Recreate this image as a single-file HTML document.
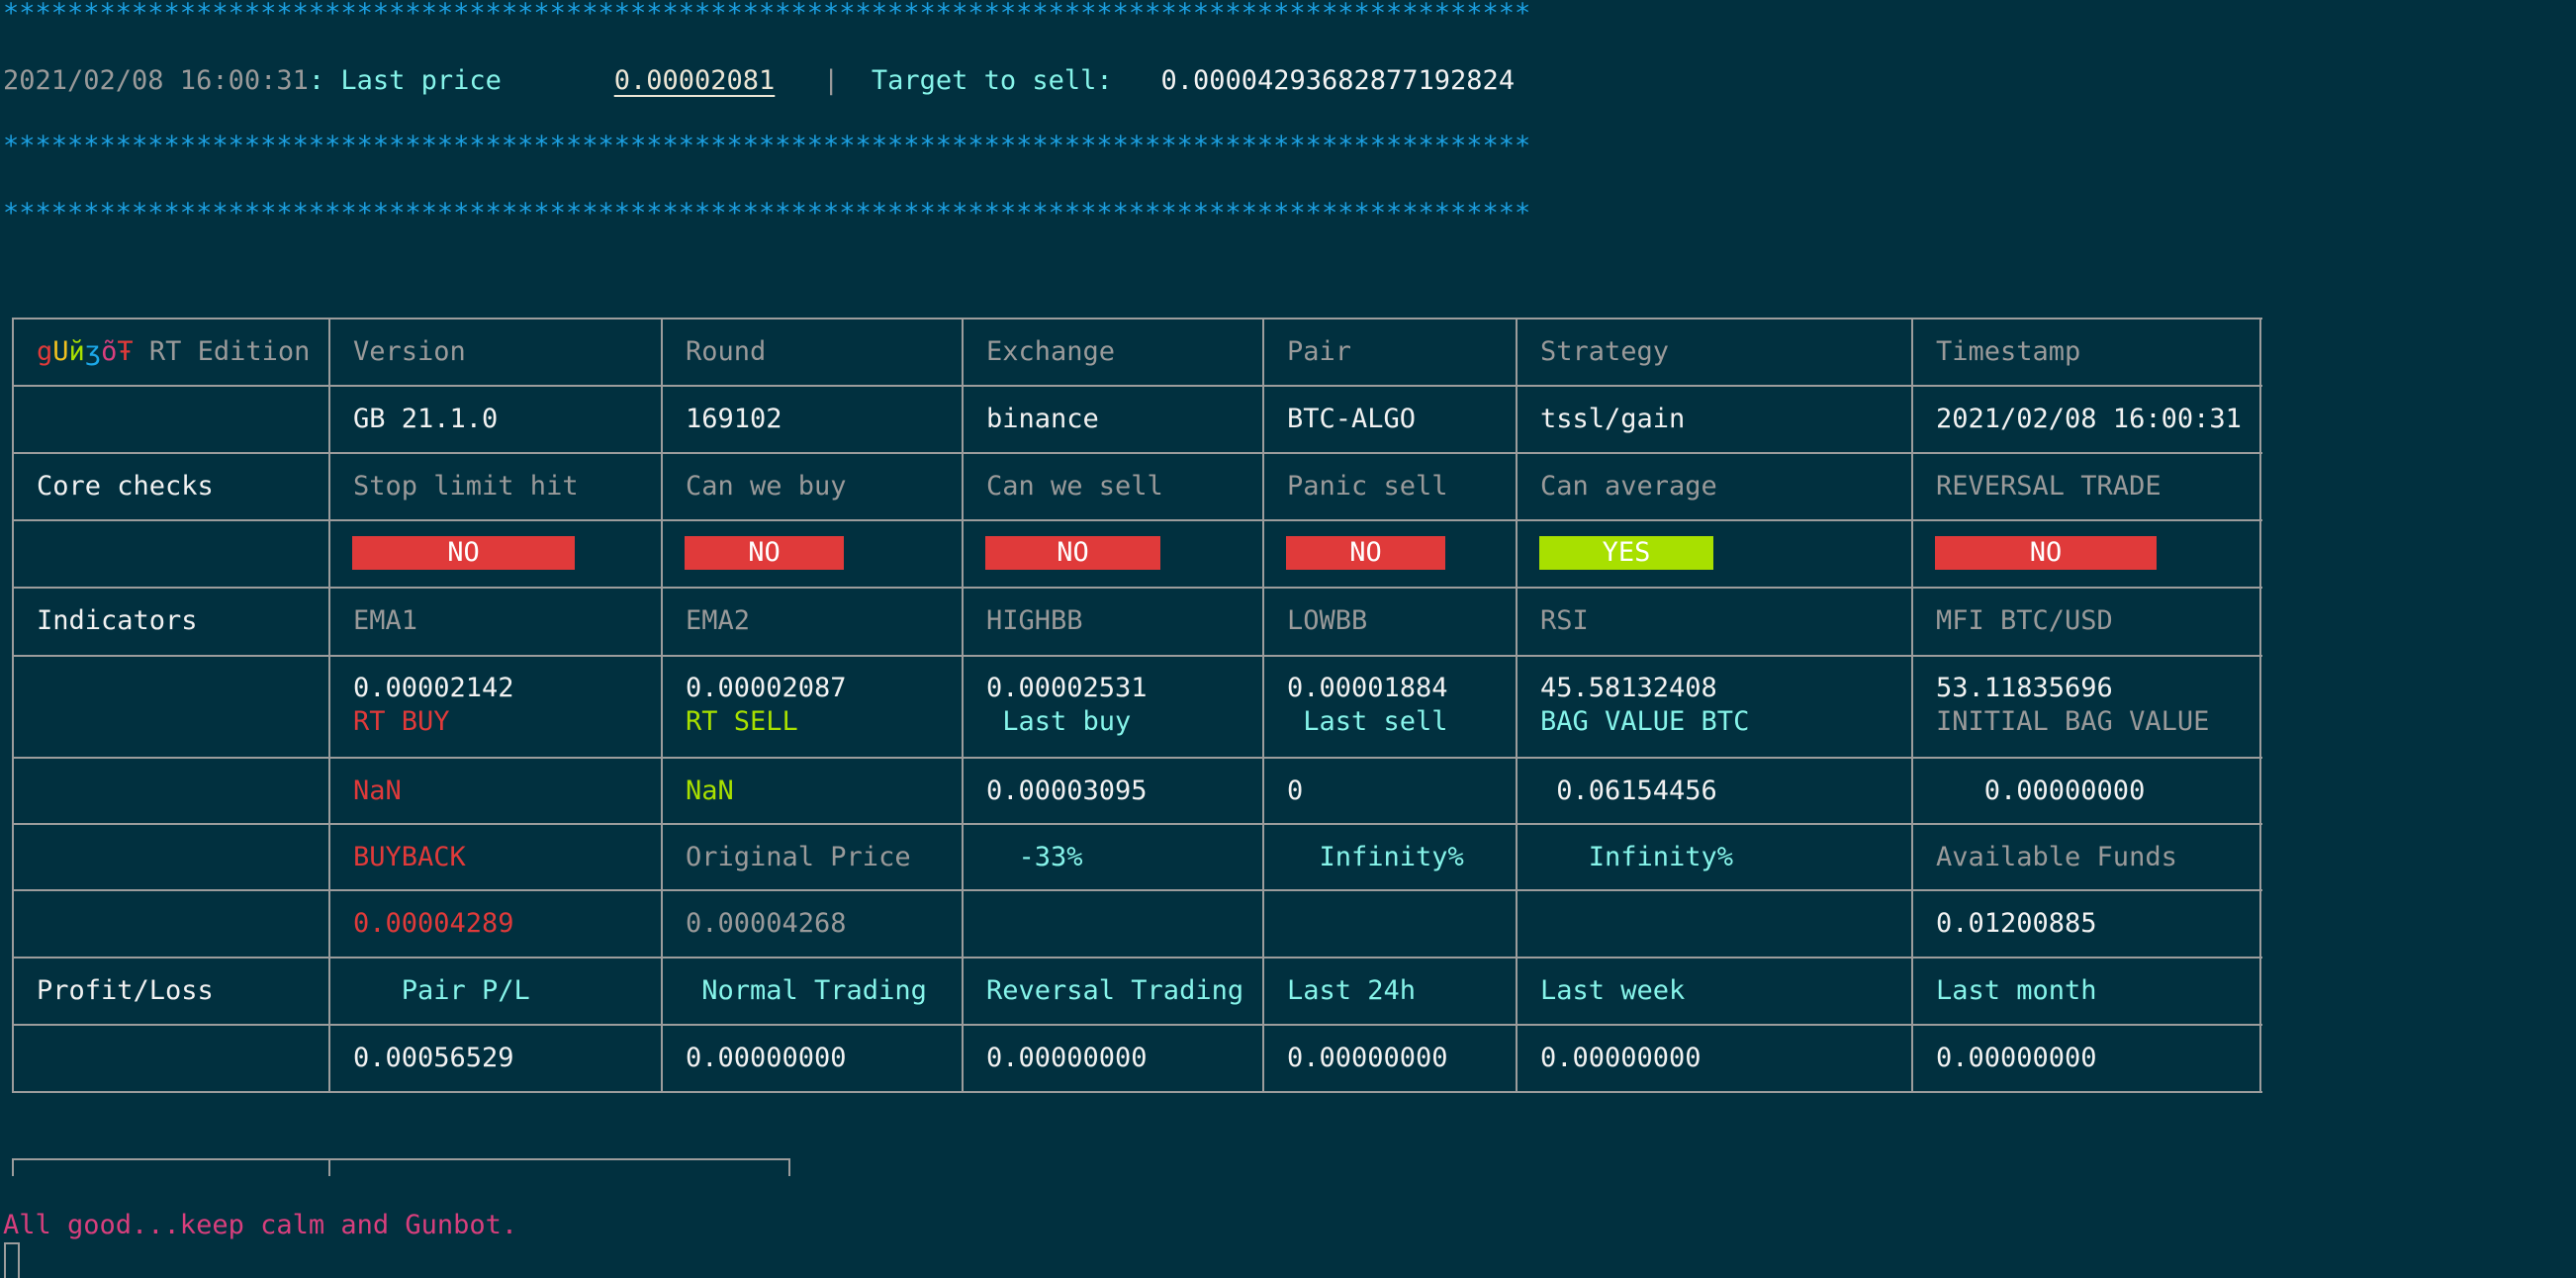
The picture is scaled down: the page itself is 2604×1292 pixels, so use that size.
<!DOCTYPE html>
<html><head><meta charset="utf-8"><style>
html,body{margin:0;padding:0;}
body{width:2604px;height:1290px;background:#01303f;position:relative;overflow:hidden;font-family:"DejaVu Sans Mono","Liberation Mono",monospace;font-size:27px;color:#f0f0f0;}
.t{position:absolute;white-space:pre;line-height:34px;}
.h{position:absolute;height:2px;background:#9c9c9c;}
.v{position:absolute;width:2px;background:#9c9c9c;}
.c{position:absolute;white-space:pre;line-height:68px;height:68px;}
.g{color:#9a9a9a}.w{color:#f2f2f2}.cy{color:#86f4ea}.r{color:#e03a3a}.y{color:#a8e000}.bl{color:#1c9fe0}
.b{position:absolute;height:34px;line-height:34px;text-align:center;color:#fff;}
</style></head><body>
<div class="t bl" style="left:3px;top:-3px">***********************************************************************************************</div>
<div class="t" style="left:3px;top:65px"><span class="g">2021/02/08 16:00:31</span><span class="cy">: Last price       </span><span style="color:#ece6d6;text-decoration:underline;text-underline-offset:6px">0.00002081</span><span class="g">   |  </span><span class="cy">Target to sell:</span>   <span class="w">0.00004293682877192824</span></div>
<div class="t bl" style="left:3px;top:131px">***********************************************************************************************</div>
<div class="t bl" style="left:3px;top:199px">***********************************************************************************************</div>

<!-- table lines -->
<div class="h" style="left:13px;width:2274px;top:321px"></div>
<div class="h" style="left:13px;width:2274px;top:389px"></div>
<div class="h" style="left:13px;width:2274px;top:457px"></div>
<div class="h" style="left:13px;width:2274px;top:525px"></div>
<div class="h" style="left:13px;width:2274px;top:593px"></div>
<div class="h" style="left:13px;width:2274px;top:662px"></div>
<div class="h" style="left:13px;width:2274px;top:765px"></div>
<div class="h" style="left:13px;width:2274px;top:832px"></div>
<div class="h" style="left:13px;width:2274px;top:899px"></div>
<div class="h" style="left:13px;width:2274px;top:967px"></div>
<div class="h" style="left:13px;width:2274px;top:1035px"></div>
<div class="h" style="left:13px;width:2274px;top:1103px"></div>
<div class="v" style="left:12px;top:321px;height:784px"></div>
<div class="v" style="left:332px;top:321px;height:784px"></div>
<div class="v" style="left:668px;top:321px;height:784px"></div>
<div class="v" style="left:972px;top:321px;height:784px"></div>
<div class="v" style="left:1276px;top:321px;height:784px"></div>
<div class="v" style="left:1532px;top:321px;height:784px"></div>
<div class="v" style="left:1932px;top:321px;height:784px"></div>
<div class="v" style="left:2284px;top:321px;height:784px"></div>

<!-- row 0 -->
<div class="c" style="left:37px;top:322px"><span style="color:#e03a3a">g</span><span style="color:#f0c020">U</span><span style="color:#a8e000">й</span><span style="color:#1ca8e8">ʒ</span><span style="color:#d83f7d">õ</span><span style="color:#e03a3a">Ŧ</span><span class="g"> RT Edition</span></div>
<div class="c g" style="left:357px;top:322px">Version</div>
<div class="c g" style="left:693px;top:322px">Round</div>
<div class="c g" style="left:997px;top:322px">Exchange</div>
<div class="c g" style="left:1301px;top:322px">Pair</div>
<div class="c g" style="left:1557px;top:322px">Strategy</div>
<div class="c g" style="left:1957px;top:322px">Timestamp</div>
<!-- row 1 -->
<div class="c w" style="left:357px;top:390px">GB 21.1.0</div>
<div class="c w" style="left:693px;top:390px">169102</div>
<div class="c w" style="left:997px;top:390px">binance</div>
<div class="c w" style="left:1301px;top:390px">BTC-ALGO</div>
<div class="c w" style="left:1557px;top:390px">tssl/gain</div>
<div class="c w" style="left:1957px;top:390px">2021/02/08 16:00:31</div>
<!-- row 2 -->
<div class="c w" style="left:37px;top:458px">Core checks</div>
<div class="c g" style="left:357px;top:458px">Stop limit hit</div>
<div class="c g" style="left:693px;top:458px">Can we buy</div>
<div class="c g" style="left:997px;top:458px">Can we sell</div>
<div class="c g" style="left:1301px;top:458px">Panic sell</div>
<div class="c g" style="left:1557px;top:458px">Can average</div>
<div class="c g" style="left:1957px;top:458px">REVERSAL TRADE</div>
<!-- row 3 badges -->
<div class="b" style="left:356px;top:542px;width:225px;background:#e03a3a">NO</div>
<div class="b" style="left:692px;top:542px;width:161px;background:#e03a3a">NO</div>
<div class="b" style="left:996px;top:542px;width:177px;background:#e03a3a">NO</div>
<div class="b" style="left:1300px;top:542px;width:161px;background:#e03a3a">NO</div>
<div class="b" style="left:1556px;top:542px;width:176px;background:#a8e000">YES</div>
<div class="b" style="left:1956px;top:542px;width:224px;background:#e03a3a">NO</div>
<!-- row 4 -->
<div class="c w" style="left:37px;top:594px">Indicators</div>
<div class="c g" style="left:357px;top:594px">EMA1</div>
<div class="c g" style="left:693px;top:594px">EMA2</div>
<div class="c g" style="left:997px;top:594px">HIGHBB</div>
<div class="c g" style="left:1301px;top:594px">LOWBB</div>
<div class="c g" style="left:1557px;top:594px">RSI</div>
<div class="c g" style="left:1957px;top:594px">MFI BTC/USD</div>
<!-- row 5 double -->
<div class="t" style="left:357px;top:679px"><span class="w">0.00002142</span>
<span class="r">RT BUY</span></div>
<div class="t" style="left:693px;top:679px"><span class="w">0.00002087</span>
<span class="y">RT SELL</span></div>
<div class="t" style="left:997px;top:679px"><span class="w">0.00002531</span>
<span class="cy"> Last buy</span></div>
<div class="t" style="left:1301px;top:679px"><span class="w">0.00001884</span>
<span class="cy"> Last sell</span></div>
<div class="t" style="left:1557px;top:679px"><span class="w">45.58132408</span>
<span class="cy">BAG VALUE BTC</span></div>
<div class="t" style="left:1957px;top:679px"><span class="w">53.11835696</span>
<span class="g">INITIAL BAG VALUE</span></div>
<!-- row 6 -->
<div class="c r" style="left:357px;top:766px">NaN</div>
<div class="c y" style="left:693px;top:766px">NaN</div>
<div class="c w" style="left:997px;top:766px">0.00003095</div>
<div class="c w" style="left:1301px;top:766px">0</div>
<div class="c w" style="left:1557px;top:766px"> 0.06154456</div>
<div class="c w" style="left:1957px;top:766px">   0.00000000</div>
<!-- row 7 -->
<div class="c r" style="left:357px;top:833px">BUYBACK</div>
<div class="c g" style="left:693px;top:833px">Original Price</div>
<div class="c cy" style="left:997px;top:833px">  -33%</div>
<div class="c cy" style="left:1301px;top:833px">  Infinity%</div>
<div class="c cy" style="left:1557px;top:833px">   Infinity%</div>
<div class="c g" style="left:1957px;top:833px">Available Funds</div>
<!-- row 8 -->
<div class="c r" style="left:357px;top:900px">0.00004289</div>
<div class="c g" style="left:693px;top:900px">0.00004268</div>
<div class="c w" style="left:1957px;top:900px">0.01200885</div>
<!-- row 9 -->
<div class="c w" style="left:37px;top:968px">Profit/Loss</div>
<div class="c cy" style="left:357px;top:968px">   Pair P/L</div>
<div class="c cy" style="left:693px;top:968px"> Normal Trading</div>
<div class="c cy" style="left:997px;top:968px">Reversal Trading</div>
<div class="c cy" style="left:1301px;top:968px">Last 24h</div>
<div class="c cy" style="left:1557px;top:968px">Last week</div>
<div class="c cy" style="left:1957px;top:968px">Last month</div>
<!-- row 10 -->
<div class="c w" style="left:357px;top:1036px">0.00056529</div>
<div class="c w" style="left:693px;top:1036px">0.00000000</div>
<div class="c w" style="left:997px;top:1036px">0.00000000</div>
<div class="c w" style="left:1301px;top:1036px">0.00000000</div>
<div class="c w" style="left:1557px;top:1036px">0.00000000</div>
<div class="c w" style="left:1957px;top:1036px">0.00000000</div>

<!-- partial table -->
<div class="h" style="left:12px;width:787px;top:1171px"></div>
<div class="v" style="left:12px;top:1171px;height:18px"></div>
<div class="v" style="left:332px;top:1171px;height:18px"></div>
<div class="v" style="left:797px;top:1171px;height:18px"></div>

<div class="t" style="left:3px;top:1222px;color:#d83f7d">All good...keep calm and Gunbot.</div>
<div style="position:absolute;left:4px;top:1256px;width:12px;height:34px;border:2px solid #9c9c9c;border-bottom:none"></div>
</body></html>
